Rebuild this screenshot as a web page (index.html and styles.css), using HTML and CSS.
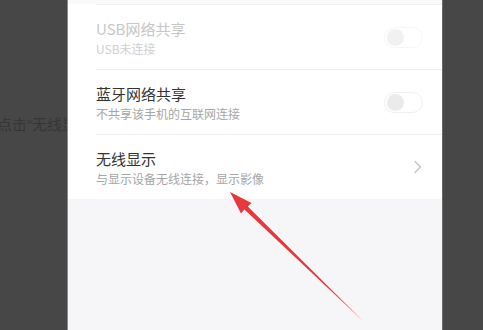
FILE: index.html
```html
<!DOCTYPE html>
<html lang="zh-CN">
<head>
<meta charset="utf-8">
<title>无线显示</title>
<link rel="stylesheet" href="styles.css">
</head>
<body>
<div class="stage">
  <p class="caption">点击“无线显示”选项</p>
  <div class="phone">
    <div class="top-strip"></div>
    <div class="list">
      <div class="row disabled">
        <div class="texts">
          <div class="title">USB网络共享</div>
          <div class="sub">USB未连接</div>
        </div>
        <span class="toggle"><span class="knob"></span></span>
      </div>
      <div class="row">
        <div class="texts">
          <div class="title">蓝牙网络共享</div>
          <div class="sub">不共享该手机的互联网连接</div>
        </div>
        <span class="toggle"><span class="knob"></span></span>
      </div>
      <div class="row">
        <div class="texts">
          <div class="title">无线显示</div>
          <div class="sub">与显示设备无线连接，显示影像</div>
        </div>
        <svg class="chev" width="10" height="14" viewBox="0 0 10 14"><path d="M2 1.5 L7.5 7 L2 12.5" fill="none" stroke="#c4c4c4" stroke-width="1.4" stroke-linecap="round" stroke-linejoin="round"/></svg>
      </div>
    </div>
    <div class="rest"></div>
  </div>
</div>
<svg class="arrow" width="483" height="330" viewBox="0 0 483 330">
  <polygon points="230,192 251.5,203 247.8,206.4 363,321 244.4,209.4 241,213.5" fill="#e8383b"/>
</svg>
</body>
</html>
```
FILE: styles.css
```css
html, body {
  margin: 0;
  padding: 0;
}
body {
  width: 483px;
  height: 330px;
  overflow: hidden;
  background: #474747;
  font-family: "Noto Sans CJK SC", "Noto Sans", sans-serif;
  position: relative;
}
.stage {
  display: grid;
  width: 483px;
  height: 330px;
}
.caption {
  grid-area: 1 / 1;
  margin: 115px 0 0 -3px;
  font-family: "Liberation Sans", "Noto Sans CJK SC", sans-serif;
  font-size: 15px;
  line-height: 20px;
  color: #363636;
  white-space: nowrap;
  align-self: start;
  justify-self: start;
}
.phone {
  grid-area: 1 / 1;
  margin-left: 67px;
  width: 374px;
  height: 330px;
  border-left: 1px solid #8a8a8a;
  border-right: 1px solid #6a6a6a;
  background: #f6f5f8;
  display: flex;
  flex-direction: column;
  z-index: 1;
}
.top-strip {
  height: 4px;
  background: #faf9fb;
}
.list {
  background: #ffffff;
  padding-left: 28px;
}
.row {
  height: 64px;
  border-top: 1px solid #efeef0;
  display: flex;
  align-items: center;
  padding-right: 19px;
  box-sizing: content-box;
}
.texts {
  flex: 1;
  display: flex;
  flex-direction: column;
  padding-top: 1px;
}
.title {
  font-size: 15px;
  line-height: 20px;
  color: #333333;
}
.sub {
  font-size: 12px;
  line-height: 16px;
  margin-top: 2px;
  color: #a6a6a6;
}
.disabled .title {
  color: #c6c6c6;
}
.disabled .sub {
  color: #cfcfcf;
}
.toggle {
  width: 35px;
  height: 19px;
  border: 1px solid #f0f0f0;
  border-radius: 11px;
  background: #ffffff;
  display: flex;
  align-items: center;
  padding-left: 2px;
  box-sizing: content-box;
}
.knob {
  width: 17px;
  height: 17px;
  border-radius: 50%;
  background: #ebebeb;
}
.disabled .knob {
  background: #f1f1f1;
}
.disabled .toggle {
  border-color: #f6f6f6;
}
.rest {
  flex: 1;
  background: #f6f5f8;
}
.arrow {
  position: absolute;
  left: 0;
  top: 0;
  z-index: 2;
  pointer-events: none;
}
```
